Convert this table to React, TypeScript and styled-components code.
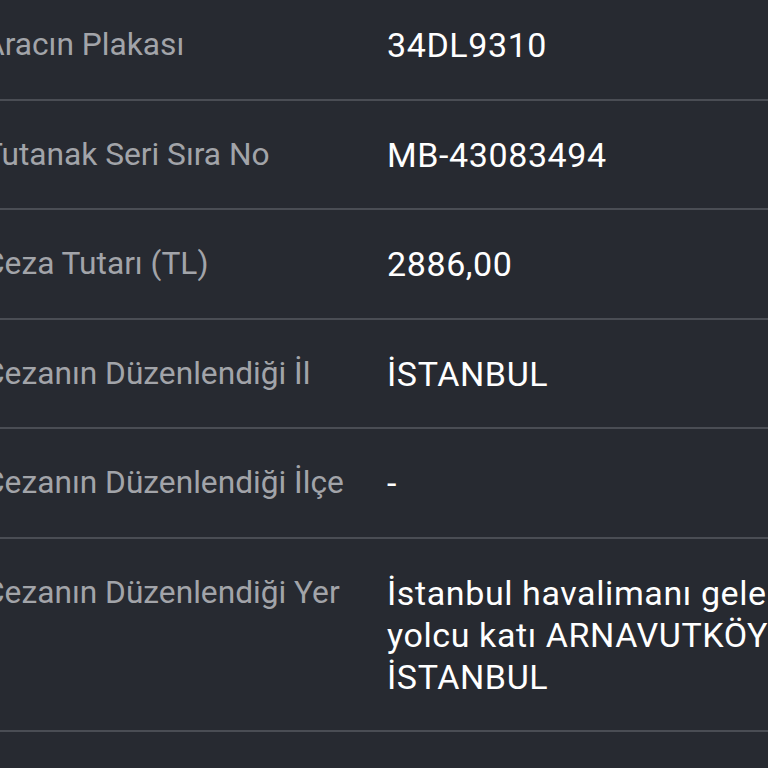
import React from "react";
import styled, { createGlobalStyle } from "styled-components";

const Global = createGlobalStyle`
  html, body {
    margin: 0;
    padding: 0;
    background: #272a31;
    overflow: hidden;
  }
  body {
    font-family: Roboto, "Noto Sans", "Liberation Sans", sans-serif;
    -webkit-font-smoothing: antialiased;
  }
`;

const Screen = styled.div`
  width: 768px;
  height: 768px;
  overflow: hidden;
  background: #272a31;
`;

const List = styled.div`
  display: flex;
  flex-direction: column;
  margin: -9px 0 0 -16px;
  width: 900px;
`;

const Row = styled.div`
  display: grid;
  grid-template-columns: 403px 430px;
  padding: 33px 0 32.5px;
  border-bottom: 2px solid #4a4d54;
`;

const Label = styled.div`
  font-size: 31.7px;
  line-height: 42px;
  color: #a2a4a9;
  font-weight: 400;
`;

const Value = styled.div`
  font-size: 34px;
  letter-spacing: 0.6px;
  line-height: 42px;
  color: #ffffff;
  font-weight: 400;
`;

const rows: { label: string; value: string }[] = [
  { label: "Aracın Plakası", value: "34DL9310" },
  { label: "Tutanak Seri Sıra No", value: "MB-43083494" },
  { label: "Ceza Tutarı (TL)", value: "2886,00" },
  { label: "Cezanın Düzenlendiği İl", value: "İSTANBUL" },
  { label: "Cezanın Düzenlendiği İlçe", value: "-" },
  {
    label: "Cezanın Düzenlendiği Yer",
    value: "İstanbul havalimanı gelen yolcu katı ARNAVUTKÖY İSTANBUL",
  },
  { label: "", value: "" },
];

export default function App() {
  return (
    <Screen>
      <Global />
      <List>
        {rows.map((r, i) => (
          <Row key={i}>
            <Label>{r.label}</Label>
            <Value>{r.value}</Value>
          </Row>
        ))}
      </List>
    </Screen>
  );
}
